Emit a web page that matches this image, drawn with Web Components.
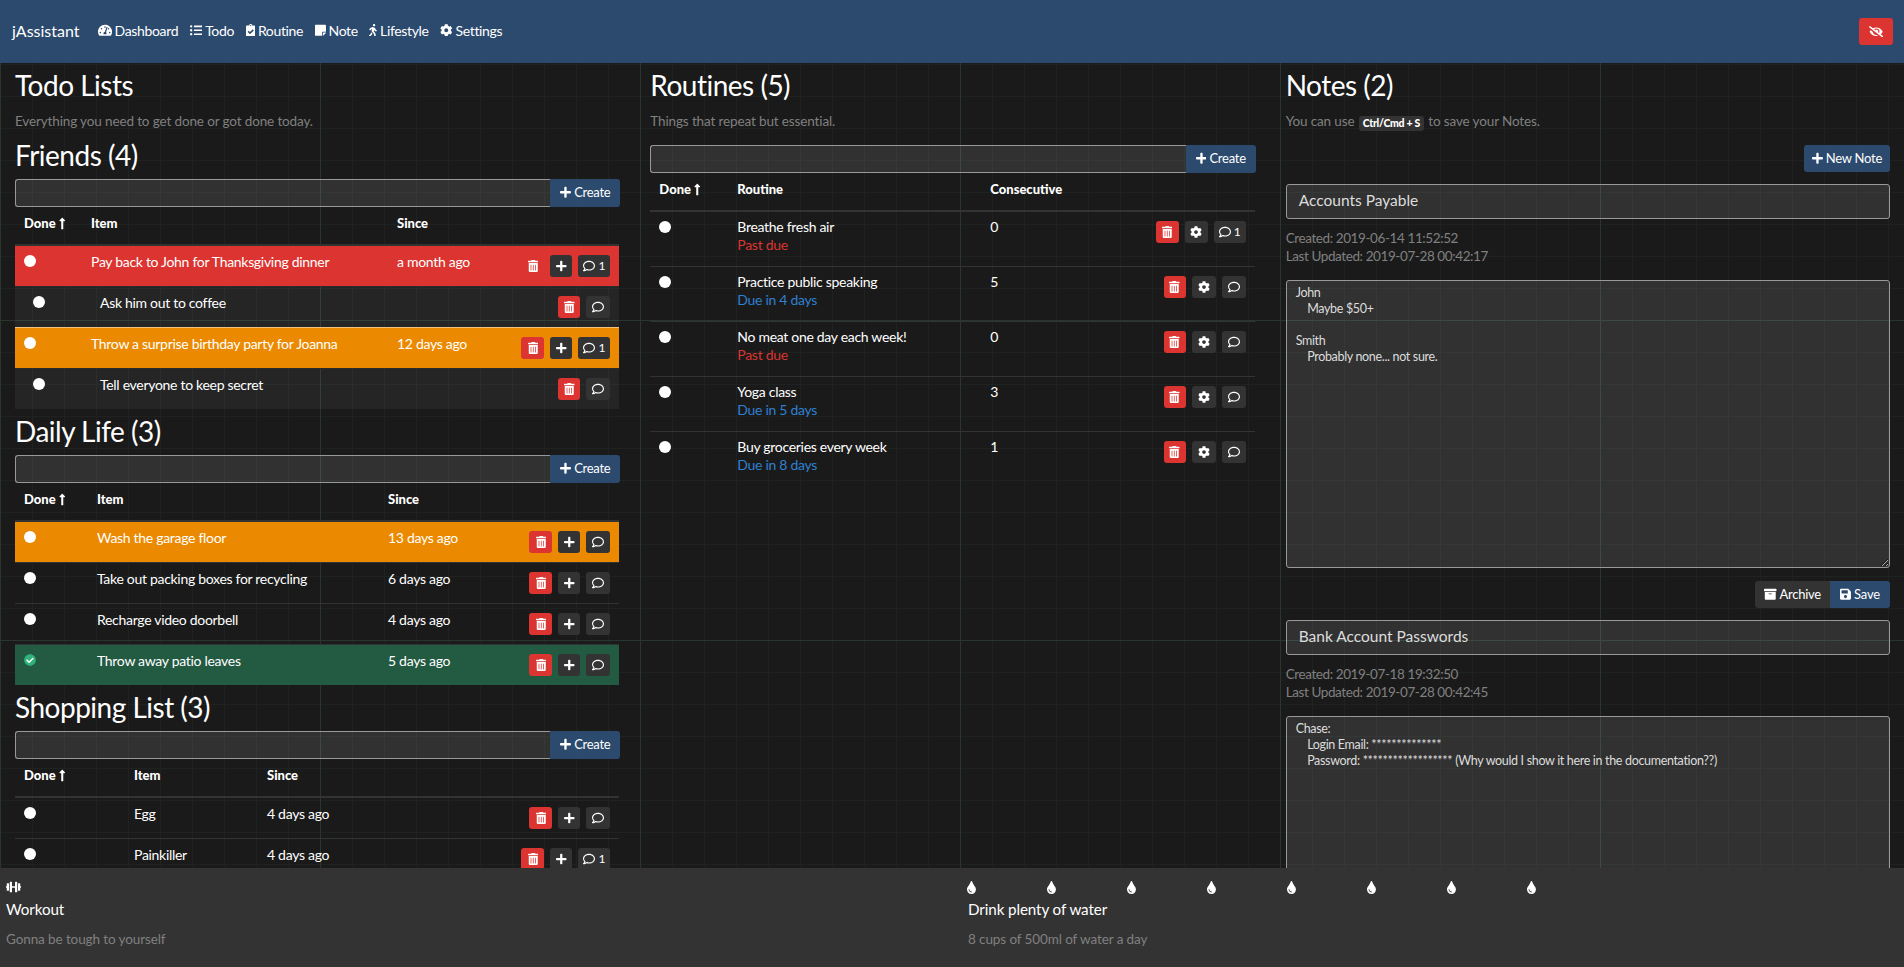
<!DOCTYPE html>
<html lang="en">
<head>
<meta charset="utf-8">
<title>jAssistant</title>
<style>
  html, body { margin: 0; height: 967px; overflow: hidden; background: #1a1a1a; }
  body { font-family: Lato, "Liberation Sans", sans-serif; color: #fff; font-size: 14px; letter-spacing: -.3px; }
</style>
</head>
<body>
<j-app>
  <app-nav slot="nav"></app-nav>

  <page-column>
    <section-head note="Everything you need to get done or got done today.">Todo Lists</section-head>

    <todo-list title="Friends (4)" item-at="67" since-at="306">
      <todo-row tone="red" since="a month ago" comments="1">Pay back to John for Thanksgiving dinner</todo-row>
      <todo-row child>Ask him out to coffee</todo-row>
      <todo-row tone="orange" since="12 days ago" comments="1" seam>Throw a surprise birthday party for Joanna</todo-row>
      <todo-row child>Tell everyone to keep secret</todo-row>
    </todo-list>

    <todo-list title="Daily Life (3)" item-at="73" since-at="291">
      <todo-row tone="orange" since="13 days ago">Wash the garage floor</todo-row>
      <todo-row since="6 days ago">Take out packing boxes for recycling</todo-row>
      <todo-row since="4 days ago">Recharge video doorbell</todo-row>
      <todo-row tone="green" since="5 days ago" done>Throw away patio leaves</todo-row>
    </todo-list>

    <todo-list title="Shopping List (3)" item-at="110" since-at="133">
      <todo-row since="4 days ago">Egg</todo-row>
      <todo-row since="4 days ago" comments="1">Painkiller</todo-row>
    </todo-list>
  </page-column>

  <page-column>
    <section-head note="Things that repeat but essential.">Routines (5)</section-head>
    <routine-table>
      <routine-row due="Past due" late streak="0" comments="1">Breathe fresh air</routine-row>
      <routine-row due="Due in 4 days" streak="5">Practice public speaking</routine-row>
      <routine-row due="Past due" late streak="0">No meat one day each week!</routine-row>
      <routine-row due="Due in 5 days" streak="3">Yoga class</routine-row>
      <routine-row due="Due in 8 days" streak="1" last>Buy groceries every week</routine-row>
    </routine-table>
  </page-column>

  <page-column>
    <section-head>Notes (2)<span slot="note">You can use <key-cap>Ctrl/Cmd + S</key-cap> to save your Notes.</span></section-head>
    <div style="display:flex;justify-content:flex-end;margin:12px 0">
      <solid-btn tone="blue" icon="plus" label="New Note" w="86"></solid-btn>
    </div>
    <note-card title="Accounts Payable" created="2019-06-14 11:52:52" updated="2019-07-28 00:42:17" actions>John
    Maybe $50+

Smith
    Probably none... not sure.</note-card>
    <note-card title="Bank Account Passwords" created="2019-07-18 19:32:50" updated="2019-07-28 00:42:45">Chase:
    Login Email: **************
    Password: ****************** (Why would I show it here in the documentation??)</note-card>
  </page-column>

  <tracker-panel slot="foot" icon="dumbbell" title="Workout" note="Gonna be tough to yourself"></tracker-panel>
  <tracker-panel slot="foot" icon="tint" repeat="8" title="Drink plenty of water" note="8 cups of 500ml of water a day"></tracker-panel>
</j-app>

<script>
const ICONS = {
  plus: [448, 'M416 208H272V64c0-17.67-14.33-32-32-32h-32c-17.67 0-32 14.33-32 32v144H32c-17.67 0-32 14.33-32 32v32c0 17.67 14.33 32 32 32h144v144c0 17.67 14.33 32 32 32h32c17.67 0 32-14.33 32-32V304h144c17.67 0 32-14.33 32-32v-32c0-17.67-14.33-32-32-32z'],
  trash: [448, 'M32 464a48 48 0 0 0 48 48h288a48 48 0 0 0 48-48V128H32zm272-256a16 16 0 0 1 32 0v224a16 16 0 0 1-32 0zm-96 0a16 16 0 0 1 32 0v224a16 16 0 0 1-32 0zm-96 0a16 16 0 0 1 32 0v224a16 16 0 0 1-32 0zM432 32H312l-9.4-18.7A24 24 0 0 0 281.1 0H166.8a23.72 23.72 0 0 0-21.4 13.3L136 32H16A16 16 0 0 0 0 48v32a16 16 0 0 0 16 16h416a16 16 0 0 0 16-16V48a16 16 0 0 0-16-16z'],
  cog: [512, 'M487.4 315.7l-42.6-24.6c4.3-23.2 4.3-47 0-70.2l42.6-24.6c4.9-2.8 7.1-8.6 5.5-14-11.1-35.6-30-67.8-54.7-94.6-3.8-4.1-10-5.1-14.8-2.3L380.8 110c-17.9-15.4-38.5-27.3-60.8-35.1V25.8c0-5.6-3.9-10.5-9.4-11.7-36.7-8.2-74.3-7.8-109.2 0-5.5 1.2-9.4 6.1-9.4 11.7V75c-22.2 7.9-42.8 19.8-60.8 35.1L88.7 85.5c-4.9-2.8-11-1.9-14.8 2.3-24.7 26.7-43.6 58.9-54.7 94.6-1.7 5.4.6 11.2 5.5 14L67.3 221c-4.3 23.2-4.3 47 0 70.2l-42.6 24.6c-4.9 2.8-7.1 8.6-5.5 14 11.1 35.6 30 67.8 54.7 94.6 3.8 4.1 10 5.1 14.8 2.3l42.6-24.6c17.9 15.4 38.5 27.3 60.8 35.1v49.2c0 5.6 3.9 10.5 9.4 11.7 36.7 8.2 74.3 7.8 109.2 0 5.5-1.2 9.4-6.1 9.4-11.7v-49.2c22.2-7.9 42.8-19.8 60.8-35.1l42.6 24.6c4.9 2.8 11 1.9 14.8-2.3 24.7-26.7 43.6-58.9 54.7-94.6 1.5-5.5-.7-11.3-5.6-14.1zM256 336c-44.1 0-80-35.9-80-80s35.9-80 80-80 80 35.9 80 80-35.9 80-80 80z'],
  comment: [512, 'M256 32C114.6 32 0 125.1 0 240c0 47.6 19.9 91.2 52.9 126.3C38 405.7 7 439.1 6.5 439.5c-6.6 7-8.4 17.2-4.6 26S14.4 480 24 480c61.5 0 110-25.7 139.1-46.3C192 442.8 223.2 448 256 448c141.4 0 256-93.1 256-208S397.4 32 256 32zm0 368c-26.7 0-53.1-4.1-78.4-12.1l-22.7-7.2-19.5 13.8c-14.3 10.1-33.9 21.4-57.5 29 7.3-12.1 14.4-25.7 19.9-40.2l10.6-28.1-20.6-21.8C69.7 314.1 48 282.2 48 240c0-88.2 93.3-160 208-160s208 71.8 208 160-93.3 160-208 160z'],
  check: [512, 'M504 256c0 136.967-111.033 248-248 248S8 392.967 8 256 119.033 8 256 8s248 111.033 248 248zM227.314 387.314l184-184c6.248-6.248 6.248-16.379 0-22.627l-22.627-22.627c-6.248-6.249-16.379-6.249-22.628 0L216 308.118l-70.059-70.059c-6.248-6.248-16.379-6.248-22.628 0l-22.627 22.627c-6.248 6.248-6.248 16.379 0 22.627l104 104c6.249 6.249 16.379 6.249 22.628.001z'],
  tint: [352, 'M205.22 22.09c-7.94-28.78-49.44-30.12-58.44 0C100.01 179.85 0 222.72 0 333.91 0 432.35 78.72 512 176 512s176-79.65 176-178.09c0-111.75-99.79-153.34-146.78-311.82zM176 448c-61.75 0-112-50.25-112-112 0-8.84 7.16-16 16-16s16 7.16 16 16c0 44.11 35.89 80 80 80 8.84 0 16 7.16 16 16s-7.16 16-16 16z'],
  list: [512, 'M48 48a48 48 0 1 0 48 48 48 48 0 0 0-48-48zm0 160a48 48 0 1 0 48 48 48 48 0 0 0-48-48zm0 160a48 48 0 1 0 48 48 48 48 0 0 0-48-48zm448 16H176a16 16 0 0 0-16 16v32a16 16 0 0 0 16 16h320a16 16 0 0 0 16-16v-32a16 16 0 0 0-16-16zm0-320H176a16 16 0 0 0-16 16v32a16 16 0 0 0 16 16h320a16 16 0 0 0 16-16V80a16 16 0 0 0-16-16zm0 160H176a16 16 0 0 0-16 16v32a16 16 0 0 0 16 16h320a16 16 0 0 0 16-16v-32a16 16 0 0 0-16-16z'],
  clipboard: [384, 'M336 64h-80c0-35.3-28.7-64-64-64s-64 28.7-64 64H48C21.5 64 0 85.5 0 112v352c0 26.5 21.5 48 48 48h288c26.5 0 48-21.5 48-48V112c0-26.5-21.5-48-48-48zM192 40c13.3 0 24 10.7 24 24s-10.7 24-24 24-24-10.7-24-24 10.7-24 24-24zm121.2 231.8l-143 141.8c-4.7 4.7-12.3 4.6-17-.1l-82.6-83.3c-4.7-4.7-4.6-12.3.1-17L99.1 285c4.7-4.7 12.3-4.6 17 .1l46 46.4 106-105.2c4.7-4.7 12.3-4.6 17 .1l28.2 28.4c4.7 4.8 4.6 12.3-.1 17z'],
  sticky: [448, 'M312 320h136V56c0-13.3-10.7-24-24-24H24C10.7 32 0 42.7 0 56v400c0 13.3 10.7 24 24 24h264V344c0-13.2 10.8-24 24-24zm129 55l-98 98c-4.5 4.5-10.6 7-17 7h-6V352h128v6.1c0 6.3-2.5 12.4-7 16.9z'],
  walking: [320, 'M208 96c26.5 0 48-21.5 48-48S234.5 0 208 0s-48 21.5-48 48 21.5 48 48 48zm94.5 149.1l-23.3-11.8-9.7-29.4c-14.7-44.6-55.7-75.8-102.2-75.9-36-.1-55.9 10.1-93.3 25.2-21.6 8.7-39.3 25.2-49.7 46.2L17.6 213c-7.8 15.8-1.5 35 14.2 42.9 15.6 7.9 34.6 1.5 42.5-14.3L81 228c3.5-7 9.3-12.5 16.5-15.4l26.8-10.8-15.2 60.7c-5.2 20.8.4 42.9 14.9 58.8l59.9 65.4c7.2 7.9 12.3 17.4 14.9 27.7l18.3 73.3c4.3 17.1 21.7 27.6 38.8 23.3 17.1-4.3 27.6-21.7 23.3-38.8l-22.2-89c-2.6-10.3-7.7-19.9-14.9-27.7l-45.5-49.7 17.2-68.7 5.5 16.5c5.3 16.1 16.7 29.4 31.7 37l23.3 11.8c15.6 7.9 34.6 1.5 42.5-14.3 7.7-15.7 1.4-35.1-14.3-43zM73.6 385.8c-3.2 8.1-8 15.4-14.2 21.5l-50 50.1c-12.5 12.5-12.5 32.8 0 45.3s32.7 12.5 45.2 0l59.4-59.4c6.1-6.1 10.9-13.4 14.2-21.5l13.5-33.8c-55.3-60.3-38.7-41.8-47.4-53.7l-20.7 51.5z'],
  archive: [512, 'M32 448c0 17.7 14.3 32 32 32h384c17.7 0 32-14.3 32-32V160H32v288zm160-212c0-6.6 5.4-12 12-12h104c6.6 0 12 5.4 12 12v8c0 6.6-5.4 12-12 12H204c-6.6 0-12-5.4-12-12v-8zM480 32H32C14.3 32 0 46.3 0 64v48c0 8.8 7.2 16 16 16h480c8.8 0 16-7.2 16-16V64c0-17.7-14.3-32-32-32z'],
  save: [448, 'M433.941 129.941l-83.882-83.882A48 48 0 0 0 316.118 32H48C21.49 32 0 53.49 0 80v352c0 26.51 21.49 48 48 48h352c26.51 0 48-21.49 48-48V163.882a48 48 0 0 0-14.059-33.941zM224 416c-35.346 0-64-28.654-64-64 0-35.346 28.654-64 64-64s64 28.654 64 64c0 35.346-28.654 64-64 64zm96-304.52V212c0 6.627-5.373 12-12 12H76c-6.627 0-12-5.373-12-12V108c0-6.627 5.373-12 12-12h228.52c3.183 0 6.235 1.264 8.485 3.515l3.48 3.48A11.996 11.996 0 0 1 320 111.48z'],
  eyeSlash: [640, 'M320 400c-75.85 0-137.25-58.71-142.9-133.11L72.2 185.82c-13.79 17.3-26.48 35.59-36.72 55.59a32.35 32.35 0 0 0 0 29.19C89.71 376.41 197.07 448 320 448c26.91 0 52.87-4 77.89-10.46L346 397.39a144.13 144.13 0 0 1-26 2.61zm313.82 58.1l-110.55-85.44a331.25 331.25 0 0 0 81.25-102.07 32.35 32.35 0 0 0 0-29.19C550.29 135.59 442.93 64 320 64a308.15 308.15 0 0 0-147.32 37.7L45.46 3.37A16 16 0 0 0 23 6.18L3.37 31.45A16 16 0 0 0 6.18 53.9l588.36 454.73a16 16 0 0 0 22.46-2.81l19.64-25.27a16 16 0 0 0-2.82-22.45zm-183.72-142l-39.3-30.38A94.75 94.75 0 0 0 416 256a94.76 94.76 0 0 0-121.31-92.21A47.65 47.65 0 0 1 304 192a46.64 46.64 0 0 1-1.54 10l-73.61-56.89A142.31 142.31 0 0 1 320 112a143.92 143.92 0 0 1 144 144c0 21.63-5.29 41.79-13.9 60.11z'],
  dumbbell: [640, 'M104 96H56c-13.3 0-24 10.7-24 24v104H8c-4.4 0-8 3.6-8 8v48c0 4.4 3.6 8 8 8h24v104c0 13.3 10.7 24 24 24h48c13.3 0 24-10.7 24-24V120c0-13.3-10.7-24-24-24zm528 128h-24V120c0-13.3-10.7-24-24-24h-48c-13.3 0-24 10.7-24 24v272c0 13.3 10.7 24 24 24h48c13.3 0 24-10.7 24-24V288h24c4.4 0 8-3.6 8-8v-48c0-4.4-3.6-8-8-8zM456 32h-48c-13.3 0-24 10.7-24 24v168H256V56c0-13.3-10.7-24-24-24h-48c-13.3 0-24 10.7-24 24v400c0 13.3 10.7 24 24 24h48c13.3 0 24-10.7 24-24V288h128v168c0 13.3 10.7 24 24 24h48c13.3 0 24-10.7 24-24V56c0-13.3-10.7-24-24-24z'],
  gauge: [576, 'M288 32C128.94 32 0 160.94 0 320c0 52.8 14.25 102.26 39.06 144.8 5.61 9.62 16.3 15.2 27.44 15.2h443c11.14 0 21.83-5.58 27.44-15.2C561.75 422.26 576 372.8 576 320c0-159.06-128.94-288-288-288zm0 64c14.71 0 26.58 10.13 30.32 23.65-1.11 2.26-2.64 4.23-3.45 6.67l-9.22 27.67c-5.13 3.49-10.97 6.01-17.64 6.01-17.67 0-32-14.33-32-32S270.33 96 288 96zM96 384c-17.67 0-32-14.33-32-32s14.33-32 32-32 32 14.33 32 32-14.33 32-32 32zm48-160c-17.67 0-32-14.33-32-32s14.33-32 32-32 32 14.33 32 32-14.33 32-32 32zm246.77-72.41l-61.33 184C343.13 347.33 352 364.54 352 384c0 11.72-3.38 22.55-8.88 32H232.88c-5.5-9.45-8.88-20.28-8.88-32 0-33.94 26.5-61.43 59.9-63.59l61.34-184.01c4.17-12.56 17.73-19.45 30.36-15.17 12.57 4.19 19.35 17.79 15.17 30.36zm14.66 57.2l15.52-46.55c3.47-1.29 7.13-2.23 11.05-2.23 17.67 0 32 14.33 32 32s-14.33 32-32 32c-11.38-.01-20.89-6.28-26.57-15.22zM480 384c-17.67 0-32-14.33-32-32s14.33-32 32-32 32 14.33 32 32-14.33 32-32 32z'],
  arrowUp: [256, 'M88 166.059V468c0 6.627 5.373 12 12 12h56c6.627 0 12-5.373 12-12V166.059h46.059c21.382 0 32.09-25.851 16.971-40.971l-86.059-86.059c-9.373-9.373-24.569-9.373-33.941 0l-86.059 86.059c-15.119 15.119-4.411 40.971 16.971 40.971H88z']
};

// shorthand: a class whose shadow root holds the given html
const shadowEl = (html) => class extends HTMLElement {
  constructor() {
    super();
    this.attachShadow({ mode: 'open' }).innerHTML = html;
  }
};

customElements.define('fa-icon', class extends HTMLElement {
  connectedCallback() {
    const [w, d] = ICONS[this.getAttribute('name')];
    if (this.shadowRoot) return;
    this.attachShadow({ mode: 'open' }).innerHTML = `
      <style>:host { display: inline-flex; line-height: 0; flex: none; } svg { height: 1em; width: auto; display: block; fill: currentColor; }</style>
      <svg viewBox="0 0 ${w} 512" aria-hidden="true"><path d="${d}"/></svg>`;
  }
});

customElements.define('j-app', shadowEl(`
  <style>
    :host {
      display: flex; flex-direction: column; height: 967px; overflow: hidden;
      background-color: #1a1a1a;
      background-image:
        linear-gradient(90deg, #28362f 1px, transparent 1px),
        linear-gradient(#28362f 1px, transparent 1px),
        linear-gradient(90deg, #1e2321 1px, transparent 1px),
        linear-gradient(#1e2321 1px, transparent 1px);
      background-size: 320px 320px, 320px 320px, 32px 32px, 32px 32px;
    }
    main {
      flex: 1; min-height: 0; overflow: hidden;
      display: grid; grid-template-columns: repeat(3, 1fr); column-gap: 31px;
      padding: 0 14px 0 15px; align-items: start;
    }
    footer {
      background: #333; height: 99px; flex: none; box-sizing: border-box;
      display: grid; grid-template-columns: 1fr 1fr; column-gap: 32px; padding: 0 6px;
    }
  </style>
  <slot name="nav"></slot>
  <main><slot></slot></main>
  <footer><slot name="foot"></slot></footer>
`));

customElements.define('page-column', shadowEl(`
  <style>:host { display: block; min-width: 0; }</style><slot></slot>
`));

customElements.define('nav-link', shadowEl(`
  <style>
    :host { display: inline-flex; align-items: center; gap: 3px; font-size: 14px; letter-spacing: -.35px; color: #fff; white-space: nowrap; }
    ::slotted(fa-icon) { font-size: 12.5px; }
  </style><slot></slot>
`));

customElements.define('app-nav', class extends HTMLElement {
  constructor() {
    super();
    const links = [['gauge', 'Dashboard'], ['list', 'Todo'], ['clipboard', 'Routine'], ['sticky', 'Note'], ['walking', 'Lifestyle'], ['cog', 'Settings']];
    this.attachShadow({ mode: 'open' }).innerHTML = `
      <style>
        :host { display: flex; align-items: center; height: 63px; flex: none; box-sizing: border-box; background: #2c4a6e; padding: 0 11px 3px 12px; }
        .brand { font-size: 16px; letter-spacing: 0; margin-right: 18px; }
        .links { display: flex; gap: 11.5px; flex: 1; }
        .eye { width: 34px; height: 27px; background: #dc3430; border-radius: 3px; display: flex; align-items: center; justify-content: center; font-size: 11.5px; margin-top: 3px; }
      </style>
      <span class="brand">jAssistant</span>
      <div class="links">${links.map(([i, t]) => `<nav-link><fa-icon name="${i}"></fa-icon>${t}</nav-link>`).join('')}</div>
      <div class="eye"><fa-icon name="eyeSlash"></fa-icon></div>`;
  }
});

customElements.define('section-head', class extends HTMLElement {
  constructor() {
    super();
    this.attachShadow({ mode: 'open' }).innerHTML = `
      <style>
        :host { display: block; }
        h2 { margin: 0; font-size: 28px; font-weight: 400; height: 46px; line-height: 44px; color: #fff; letter-spacing: -.5px; }
        .note { height: 24px; line-height: 25px; font-size: 13.5px; letter-spacing: -.13px; color: #808080; white-space: nowrap; }
      </style>
      <h2><slot></slot></h2>
      <div class="note"><slot name="note">${this.getAttribute('note') || ''}</slot></div>`;
  }
});

customElements.define('key-cap', shadowEl(`
  <style>:host { display: inline-block; background: #333; color: #fff; font-size: 10.5px; font-weight: 900; letter-spacing: -.3px; line-height: 15px; padding: 0 4px; border-radius: 3px; margin: 0 1px; vertical-align: -1px; }</style><slot></slot>
`));

customElements.define('solid-btn', class extends HTMLElement {
  constructor() {
    super();
    const w = this.getAttribute('w');
    this.attachShadow({ mode: 'open' }).innerHTML = `
      <style>
        :host { display: inline-flex; align-items: center; justify-content: center; gap: 3px; height: 27px; ${w ? `width: ${w}px;` : ''} box-sizing: border-box; padding-bottom: 1px; font-size: 13px; letter-spacing: -.25px; color: #fff; background: #333; border-radius: 3px; white-space: nowrap; flex: none; }
        :host([tone=blue]) { background: #2c4a6e; }
        fa-icon { font-size: 12.5px; }
      </style>
      <fa-icon name="${this.getAttribute('icon')}"></fa-icon><span>${this.getAttribute('label')}</span>`;
  }
});

customElements.define('quick-add', shadowEl(`
  <style>
    :host { display: flex; height: 28px; margin-right: -1px; }
    .field { flex: 1; box-sizing: border-box; background: rgba(255,255,255,.1); border: 1px solid #999; border-right: 0; border-radius: 3px 0 0 3px; }
    solid-btn { height: 28px; border-radius: 0 3px 3px 0; padding-bottom: 2px; }
  </style>
  <div class="field"></div><solid-btn tone="blue" icon="plus" label="Create" w="70"></solid-btn>
`));

customElements.define('mini-btn', class extends HTMLElement {
  constructor() {
    super();
    const count = this.getAttribute('count');
    this.attachShadow({ mode: 'open' }).innerHTML = `
      <style>
        :host { display: inline-flex; align-items: center; justify-content: center; gap: 3px; height: 22px; flex: none; width: ${this.getAttribute('w') || 24}px; background: #333; color: #fff; border-radius: 3px; font-size: 12px; padding-bottom: 1px; box-sizing: border-box; }
        :host([danger]) { background: #dc3430; }
      </style>
      <fa-icon name="${this.getAttribute('icon')}"></fa-icon>${count ? `<span>${count}</span>` : ''}`;
  }
});

customElements.define('done-dot', class extends HTMLElement {
  constructor() {
    super();
    this.attachShadow({ mode: 'open' }).innerHTML = this.hasAttribute('done')
      ? `<style>:host { display: block; width: 12px; height: 12px; font-size: 12px; color: #2fb37a; background: radial-gradient(#fff 45%, transparent 46%); }</style><fa-icon name="check"></fa-icon>`
      : `<style>:host { display: block; width: 12px; height: 12px; border-radius: 50%; background: #fff; }</style>`;
  }
});

customElements.define('table-head', shadowEl(`
  <style>
    :host { display: grid; grid-template-columns: var(--c1) var(--c2) 1fr; height: 39px; box-sizing: border-box; border-bottom: 2px solid #333; font-size: 13px; font-weight: 900; letter-spacing: 0; color: #fff; align-items: start; line-height: 33px; padding-left: 9px; }
    .first { display: flex; align-items: center; gap: 3px; height: 33px; }
    .first fa-icon { font-size: 13px; }
  </style>
  <div class="first">Done <fa-icon name="arrowUp"></fa-icon></div><div><slot name="a"></slot></div><div><slot name="b"></slot></div>
`));

customElements.define('todo-list', class extends HTMLElement {
  constructor() {
    super();
    this.attachShadow({ mode: 'open' }).innerHTML = `
      <style>
        :host { display: block; --c1: ${this.getAttribute('item-at')}px; --c2: ${this.getAttribute('since-at')}px; }
        h3 { margin: 0; height: 46px; line-height: 44px; font-size: 28px; font-weight: 400; color: #fff; letter-spacing: -.5px; }
      </style>
      <h3>${this.getAttribute('title')}</h3>
      <quick-add></quick-add>
      <table-head><span slot="a">Item</span><span slot="b">Since</span></table-head>
      <slot></slot>`;
  }
});

customElements.define('todo-row', class extends HTMLElement {
  constructor() {
    super();
    const child = this.hasAttribute('child');
    const comments = this.getAttribute('comments');
    const since = this.getAttribute('since') || '';
    const btns = child
      ? `<mini-btn danger icon="trash" w="22"></mini-btn>`
      : `<mini-btn danger icon="trash" w="23"></mini-btn><mini-btn icon="plus" w="22"></mini-btn>`;
    this.attachShadow({ mode: 'open' }).innerHTML = `
      <style>
        :host {
          display: grid; grid-template-columns: var(--c1) var(--c2) 1fr auto; height: 41px; box-sizing: border-box;
          border-top: 1px solid #333; padding: 9px 9px 0 9px; font-size: 14px; color: #fff; white-space: nowrap;
        }
        :host(:first-of-type) { border-top: 0; height: 40px; }
        :host([child]) { background: rgba(255,255,255,.05); padding-left: 18px; border-top-color: #2a2a2a; }
        :host([tone=red]) { background: #dc3430; }
        :host([tone=orange]) { background: #eb8a00; }
        :host([tone=green]) { background: #225a42; }
        :host([seam]) { border-top-color: #f3c27e; }
        .text { margin-top: -4px; line-height: 21px; }
        .btns { display: flex; gap: 6px; }
      </style>
      <done-dot ${this.hasAttribute('done') ? 'done' : ''}></done-dot>
      <div class="text"><slot></slot></div>
      <div class="text">${since}</div>
      <div class="btns">${btns}<mini-btn icon="comment" w="${comments ? 32 : 24}" ${comments ? `count="${comments}"` : ''}></mini-btn></div>`;
  }
});

customElements.define('routine-table', shadowEl(`
  <style>
    :host { display: block; --c1: 78px; --c2: 253px; }
    quick-add { margin-top: 12px; }
  </style>
  <quick-add></quick-add>
  <table-head><span slot="a">Routine</span><span slot="b">Consecutive</span></table-head>
  <slot></slot>
`));

customElements.define('routine-row', class extends HTMLElement {
  constructor() {
    super();
    const comments = this.getAttribute('comments');
    const w = comments ? [23, 23, 32] : [22, 24, 24];
    this.attachShadow({ mode: 'open' }).innerHTML = `
      <style>
        :host {
          display: grid; grid-template-columns: var(--c1) var(--c2) 1fr auto; height: 55px; box-sizing: border-box;
          border-bottom: 1px solid #333; padding: 9px 9px 0 9px; font-size: 14px; color: #fff; white-space: nowrap;
        }
        :host([last]) { border-bottom: 0; }
        .text { margin-top: -3px; line-height: 18px; }
        .due { color: #2f80d0; }
        .due.late { color: #dc3430; }
        .btns { display: flex; gap: 6px; }
      </style>
      <done-dot></done-dot>
      <div class="text"><slot></slot><div class="due ${this.hasAttribute('late') ? 'late' : ''}">${this.getAttribute('due')}</div></div>
      <div class="text">${this.getAttribute('streak')}</div>
      <div class="btns">
        <mini-btn danger icon="trash" w="${w[0]}"></mini-btn>
        <mini-btn icon="cog" w="${w[1]}"></mini-btn>
        <mini-btn icon="comment" w="${w[2]}" ${comments ? `count="${comments}"` : ''}></mini-btn>
      </div>`;
  }
});

customElements.define('note-card', class extends HTMLElement {
  constructor() {
    super();
    const acts = this.hasAttribute('actions')
      ? `<div class="acts"><solid-btn icon="archive" label="Archive" w="75"></solid-btn><solid-btn tone="blue" icon="save" label="Save" w="60"></solid-btn></div>`
      : '';
    this.attachShadow({ mode: 'open' }).innerHTML = `
      <style>
        :host { display: block; }
        .title { height: 35px; box-sizing: border-box; border: 1px solid #999; border-radius: 3px; background: rgba(255,255,255,.1); padding: 0 12px; line-height: 30px; font-size: 15.5px; letter-spacing: 0; color: #ddd; }
        .meta { margin: 10px 0 15px; font-size: 13.5px; letter-spacing: -.4px; line-height: 18px; color: #808080; }
        .body { height: 288px; box-sizing: border-box; border: 1px solid #999; border-radius: 3px; background: rgba(255,255,255,.1); padding: 4px 9px; font-size: 12.5px; letter-spacing: -.33px; line-height: 16px; color: #ddd; white-space: pre-wrap; overflow: auto; resize: vertical; }
        .acts { display: flex; justify-content: flex-end; margin: 13px 0 12px; }
        solid-btn:first-child { border-radius: 3px 0 0 3px; }
        solid-btn:last-child { border-radius: 0 3px 3px 0; }
      </style>
      <div class="title">${this.getAttribute('title')}</div>
      <div class="meta">Created: ${this.getAttribute('created')}<br>Last Updated: ${this.getAttribute('updated')}</div>
      <div class="body"><slot></slot></div>
      ${acts}`;
  }
});

customElements.define('tracker-panel', class extends HTMLElement {
  constructor() {
    super();
    const n = +this.getAttribute('repeat') || 1;
    const icon = `<fa-icon name="${this.getAttribute('icon')}"></fa-icon>`;
    this.attachShadow({ mode: 'open' }).innerHTML = `
      <style>
        :host { display: block; color: #fff; min-width: 0; }
        .marks { display: flex; height: 13px; margin-top: 13px; font-size: 12px; }
        .marks span { width: 80px; flex: none; display: flex; }
        :host([repeat]) .marks { font-size: 13px; }
        :host([repeat]) .marks span { margin-left: -1px; margin-right: 1px; }
        h4 { margin: 0; font-weight: 400; font-size: 15.2px; letter-spacing: -.1px; height: 24px; line-height: 23px; margin-top: 4px; }
        p { margin: 0; font-size: 13.5px; letter-spacing: -.1px; color: #808080; height: 21px; line-height: 21px; margin-top: 7px; }
      </style>
      <div class="marks">${`<span>${icon}</span>`.repeat(n)}</div>
      <h4>${this.getAttribute('title')}</h4>
      <p>${this.getAttribute('note')}</p>`;
  }
});
</script>
</body>
</html>
